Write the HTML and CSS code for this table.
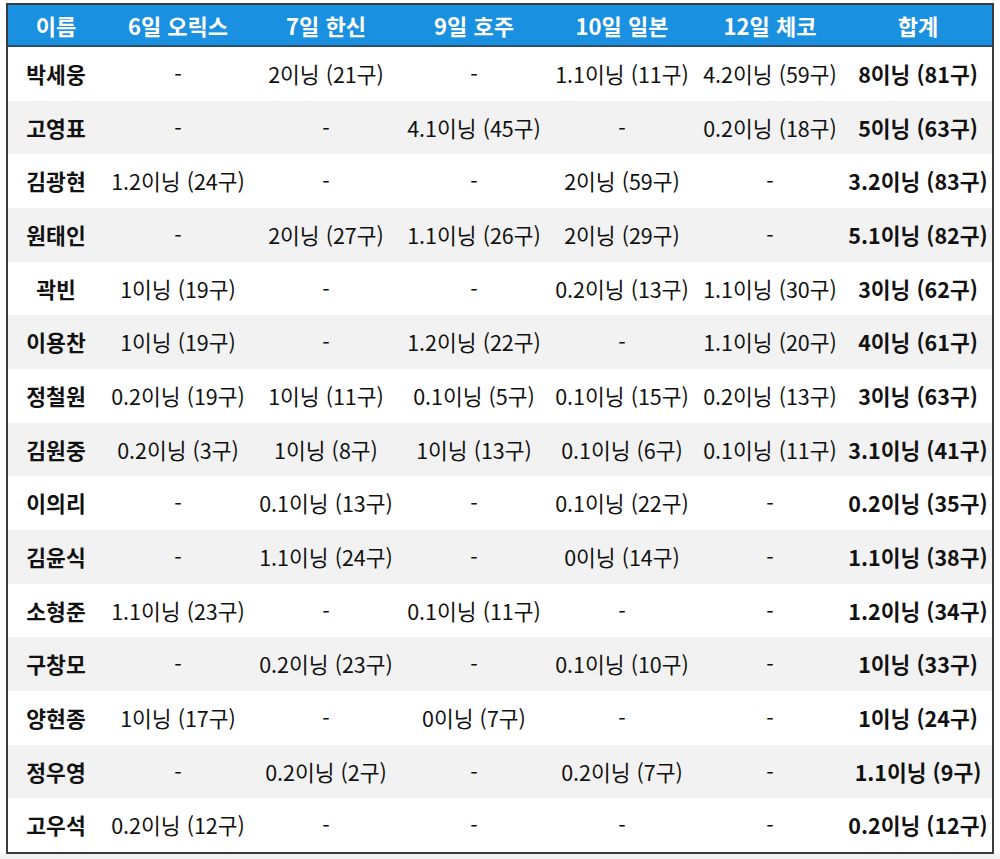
FILE: index.html
```html
<!DOCTYPE html>
<html lang="ko">
<head>
<meta charset="utf-8">
<link rel="stylesheet" href="styles.css">
<title>투구 기록</title>
</head>
<body>
<div class="page">
  <div class="table">
    <div class="row head">
      <div class="cell">이름</div>
      <div class="cell">6일 오릭스</div>
      <div class="cell">7일 한신</div>
      <div class="cell">9일 호주</div>
      <div class="cell">10일 일본</div>
      <div class="cell">12일 체코</div>
      <div class="cell">합계</div>
    </div>
    <div class="row">
      <div class="cell name">박세웅</div><div class="cell">-</div><div class="cell">2이닝 (21구)</div><div class="cell">-</div><div class="cell">1.1이닝 (11구)</div><div class="cell">4.2이닝 (59구)</div><div class="cell total">8이닝 (81구)</div>
    </div>
    <div class="row alt">
      <div class="cell name">고영표</div><div class="cell">-</div><div class="cell">-</div><div class="cell">4.1이닝 (45구)</div><div class="cell">-</div><div class="cell">0.2이닝 (18구)</div><div class="cell total">5이닝 (63구)</div>
    </div>
    <div class="row">
      <div class="cell name">김광현</div><div class="cell">1.2이닝 (24구)</div><div class="cell">-</div><div class="cell">-</div><div class="cell">2이닝 (59구)</div><div class="cell">-</div><div class="cell total">3.2이닝 (83구)</div>
    </div>
    <div class="row alt">
      <div class="cell name">원태인</div><div class="cell">-</div><div class="cell">2이닝 (27구)</div><div class="cell">1.1이닝 (26구)</div><div class="cell">2이닝 (29구)</div><div class="cell">-</div><div class="cell total">5.1이닝 (82구)</div>
    </div>
    <div class="row">
      <div class="cell name">곽빈</div><div class="cell">1이닝 (19구)</div><div class="cell">-</div><div class="cell">-</div><div class="cell">0.2이닝 (13구)</div><div class="cell">1.1이닝 (30구)</div><div class="cell total">3이닝 (62구)</div>
    </div>
    <div class="row alt">
      <div class="cell name">이용찬</div><div class="cell">1이닝 (19구)</div><div class="cell">-</div><div class="cell">1.2이닝 (22구)</div><div class="cell">-</div><div class="cell">1.1이닝 (20구)</div><div class="cell total">4이닝 (61구)</div>
    </div>
    <div class="row">
      <div class="cell name">정철원</div><div class="cell">0.2이닝 (19구)</div><div class="cell">1이닝 (11구)</div><div class="cell">0.1이닝 (5구)</div><div class="cell">0.1이닝 (15구)</div><div class="cell">0.2이닝 (13구)</div><div class="cell total">3이닝 (63구)</div>
    </div>
    <div class="row alt">
      <div class="cell name">김원중</div><div class="cell">0.2이닝 (3구)</div><div class="cell">1이닝 (8구)</div><div class="cell">1이닝 (13구)</div><div class="cell">0.1이닝 (6구)</div><div class="cell">0.1이닝 (11구)</div><div class="cell total">3.1이닝 (41구)</div>
    </div>
    <div class="row">
      <div class="cell name">이의리</div><div class="cell">-</div><div class="cell">0.1이닝 (13구)</div><div class="cell">-</div><div class="cell">0.1이닝 (22구)</div><div class="cell">-</div><div class="cell total">0.2이닝 (35구)</div>
    </div>
    <div class="row alt">
      <div class="cell name">김윤식</div><div class="cell">-</div><div class="cell">1.1이닝 (24구)</div><div class="cell">-</div><div class="cell">0이닝 (14구)</div><div class="cell">-</div><div class="cell total">1.1이닝 (38구)</div>
    </div>
    <div class="row">
      <div class="cell name">소형준</div><div class="cell">1.1이닝 (23구)</div><div class="cell">-</div><div class="cell">0.1이닝 (11구)</div><div class="cell">-</div><div class="cell">-</div><div class="cell total">1.2이닝 (34구)</div>
    </div>
    <div class="row alt">
      <div class="cell name">구창모</div><div class="cell">-</div><div class="cell">0.2이닝 (23구)</div><div class="cell">-</div><div class="cell">0.1이닝 (10구)</div><div class="cell">-</div><div class="cell total">1이닝 (33구)</div>
    </div>
    <div class="row">
      <div class="cell name">양현종</div><div class="cell">1이닝 (17구)</div><div class="cell">-</div><div class="cell">0이닝 (7구)</div><div class="cell">-</div><div class="cell">-</div><div class="cell total">1이닝 (24구)</div>
    </div>
    <div class="row alt">
      <div class="cell name">정우영</div><div class="cell">-</div><div class="cell">0.2이닝 (2구)</div><div class="cell">-</div><div class="cell">0.2이닝 (7구)</div><div class="cell">-</div><div class="cell total">1.1이닝 (9구)</div>
    </div>
    <div class="row">
      <div class="cell name">고우석</div><div class="cell">0.2이닝 (12구)</div><div class="cell">-</div><div class="cell">-</div><div class="cell">-</div><div class="cell">-</div><div class="cell total">0.2이닝 (12구)</div>
    </div>
  </div>
  <div class="footer"></div>
</div>
</body>
</html>
```

FILE: styles.css
```css
html, body {
  margin: 0;
  padding: 0;
  background: #ffffff;
}
body {
  font-family: "Noto Sans CJK KR", "Noto Sans", sans-serif;
  color: #111111;
}
.page {
  width: 1000px;
  height: 859px;
  padding-top: 3px;
  box-sizing: border-box;
  display: flex;
  flex-direction: column;
}
.table {
  margin-left: 6px;
  width: 988px;
  box-sizing: border-box;
  border: 2px solid #3a3a3a;
  background: #ffffff;
}
.row {
  display: grid;
  grid-template-columns: 96px repeat(6, 148px);
  height: 53.67px;
  align-items: center;
  font-size: 21.5px;
}
.row.alt {
  background: #f2f2f2;
}
.row.head {
  height: 42px;
  background: #1a90e0;
  border-bottom: 2px solid #2b4d6e;
  box-sizing: border-box;
  color: #ffffff;
  font-weight: 700;
  font-size: 22px;
}
.cell {
  text-align: center;
  white-space: nowrap;
  line-height: 1;
}
.name, .total {
  font-weight: 700;
}
.footer {
  flex: 1;
  background: #f2f2f2;
}
```
